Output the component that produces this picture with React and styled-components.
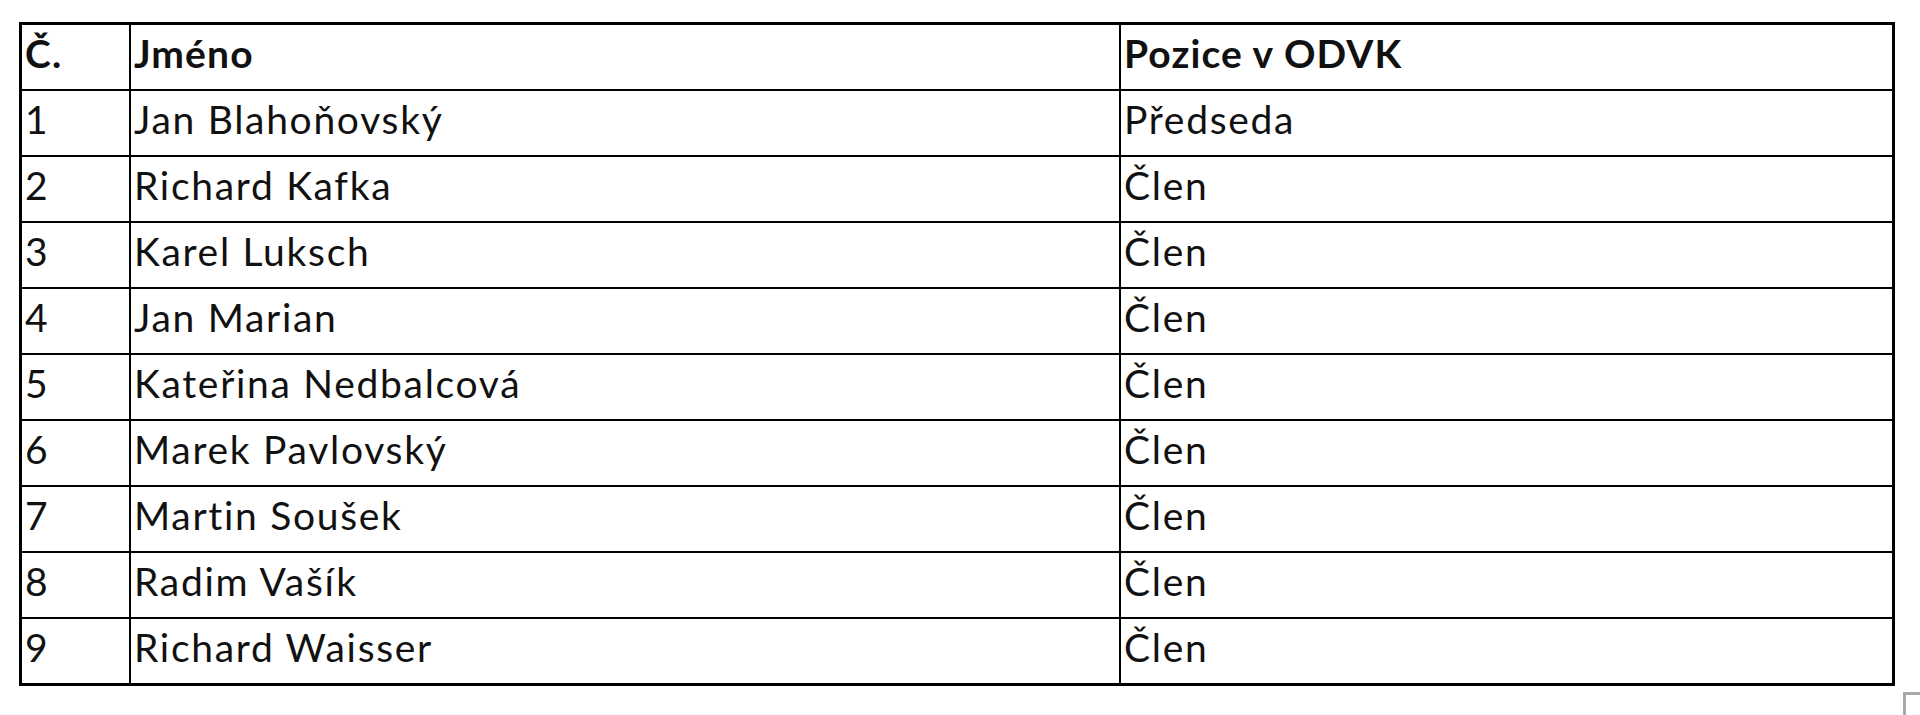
import React from "react";
import styled, { createGlobalStyle } from "styled-components";

const Global = createGlobalStyle`
  html, body { margin: 0; padding: 0; background: #fff; }
  body { font-family: Lato, "Noto Sans", sans-serif; color: #000; }
`;

const Page = styled.div`
  display: grid;
  grid-template-columns: auto auto;
  justify-content: start;
  padding: 22px 0 0 19px;
`;

const Table = styled.div`
  display: grid;
  grid-template-columns: 107px 988px 771px;
  grid-auto-rows: 64px;
  gap: 2px;
  background: #000;
  border: 3px solid #000;
`;

const Cell = styled.div`
  background: #fff;
  display: flex;
  align-items: center;
  padding: 0 0 9px 3px;
  font-size: 39px;
  font-weight: ${(p) => (p.$head ? 700 : 400)};
  letter-spacing: ${(p) => (p.$head ? "1.1px" : "1.7px")};
  color: #111;
  white-space: nowrap;
  overflow: hidden;
`;

const Corner = styled.div`
  grid-column: 2;
  grid-row: 2;
  width: 30px;
  height: 30px;
  margin: 6px 0 0 8px;
  border-left: 3px solid #a8a8a8;
  border-top: 3px solid #a8a8a8;
`;

const rows = [
  ["1", "Jan Blahoňovský", "Předseda"],
  ["2", "Richard Kafka", "Člen"],
  ["3", "Karel Luksch", "Člen"],
  ["4", "Jan Marian", "Člen"],
  ["5", "Kateřina Nedbalcová", "Člen"],
  ["6", "Marek Pavlovský", "Člen"],
  ["7", "Martin Soušek", "Člen"],
  ["8", "Radim Vašík", "Člen"],
  ["9", "Richard Waisser", "Člen"],
];

export default function App() {
  return (
    <>
      <Global />
      <Page>
        <Table>
          <Cell $head>Č.</Cell>
          <Cell $head>Jméno</Cell>
          <Cell $head>Pozice v ODVK</Cell>
          {rows.map((r) => (
            <React.Fragment key={r[0]}>
              <Cell>{r[0]}</Cell>
              <Cell>{r[1]}</Cell>
              <Cell>{r[2]}</Cell>
            </React.Fragment>
          ))}
        </Table>
        <Corner />
      </Page>
    </>
  );
}
